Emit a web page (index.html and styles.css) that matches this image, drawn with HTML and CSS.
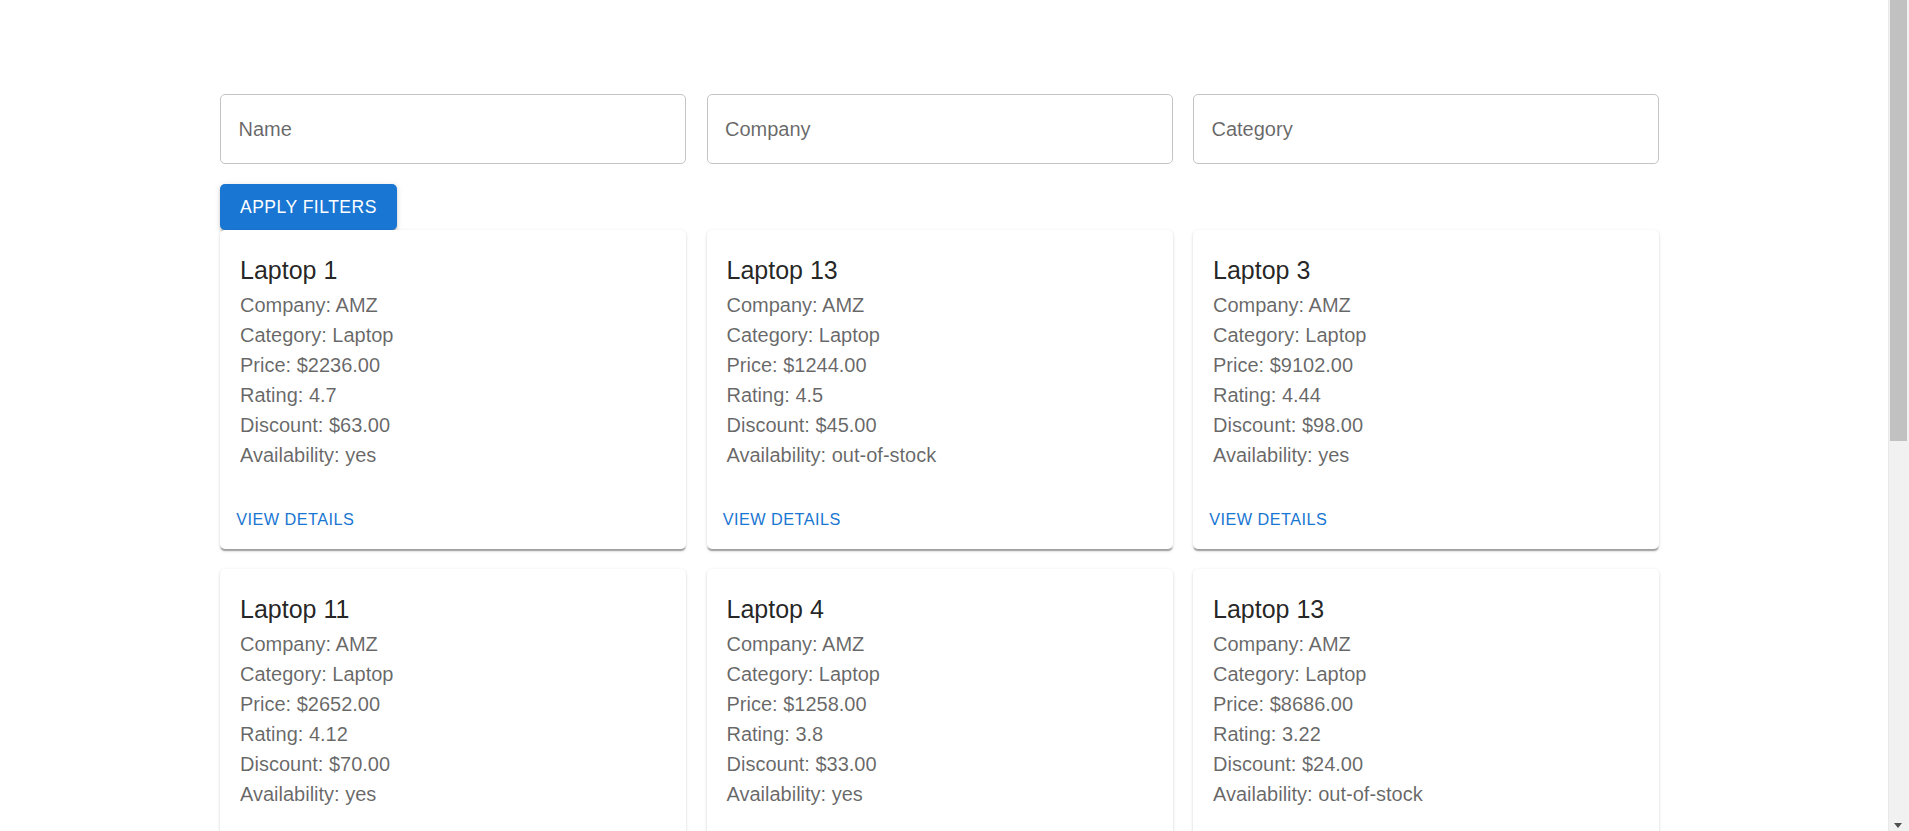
FILE: index.html
```html
<!DOCTYPE html>
<html lang="en">
<head>
<meta charset="utf-8">
<title>Products</title>
<link rel="stylesheet" href="styles.css">
</head>
<body>
<main class="page">
  <section class="filters">
    <label class="field"><input class="field-input" type="text" placeholder="Name"></label>
    <label class="field"><input class="field-input" type="text" placeholder="Company"></label>
    <label class="field"><input class="field-input" type="text" placeholder="Category"></label>
  </section>
  <button class="btn-contained" type="button">Apply Filters</button>
  <section class="grid">
    <article class="card">
      <div class="card-content">
        <h2 class="card-title">Laptop 1</h2>
        <p class="line">Company: AMZ</p>
        <p class="line">Category: Laptop</p>
        <p class="line">Price: $2236.00</p>
        <p class="line">Rating: 4.7</p>
        <p class="line">Discount: $63.00</p>
        <p class="line">Availability: yes</p>
      </div>
      <div class="card-actions"><button class="btn-text" type="button">View Details</button></div>
    </article>
    <article class="card">
      <div class="card-content">
        <h2 class="card-title">Laptop 13</h2>
        <p class="line">Company: AMZ</p>
        <p class="line">Category: Laptop</p>
        <p class="line">Price: $1244.00</p>
        <p class="line">Rating: 4.5</p>
        <p class="line">Discount: $45.00</p>
        <p class="line">Availability: out-of-stock</p>
      </div>
      <div class="card-actions"><button class="btn-text" type="button">View Details</button></div>
    </article>
    <article class="card">
      <div class="card-content">
        <h2 class="card-title">Laptop 3</h2>
        <p class="line">Company: AMZ</p>
        <p class="line">Category: Laptop</p>
        <p class="line">Price: $9102.00</p>
        <p class="line">Rating: 4.44</p>
        <p class="line">Discount: $98.00</p>
        <p class="line">Availability: yes</p>
      </div>
      <div class="card-actions"><button class="btn-text" type="button">View Details</button></div>
    </article>
    <article class="card">
      <div class="card-content">
        <h2 class="card-title">Laptop 11</h2>
        <p class="line">Company: AMZ</p>
        <p class="line">Category: Laptop</p>
        <p class="line">Price: $2652.00</p>
        <p class="line">Rating: 4.12</p>
        <p class="line">Discount: $70.00</p>
        <p class="line">Availability: yes</p>
      </div>
      <div class="card-actions"><button class="btn-text" type="button">View Details</button></div>
    </article>
    <article class="card">
      <div class="card-content">
        <h2 class="card-title">Laptop 4</h2>
        <p class="line">Company: AMZ</p>
        <p class="line">Category: Laptop</p>
        <p class="line">Price: $1258.00</p>
        <p class="line">Rating: 3.8</p>
        <p class="line">Discount: $33.00</p>
        <p class="line">Availability: yes</p>
      </div>
      <div class="card-actions"><button class="btn-text" type="button">View Details</button></div>
    </article>
    <article class="card">
      <div class="card-content">
        <h2 class="card-title">Laptop 13</h2>
        <p class="line">Company: AMZ</p>
        <p class="line">Category: Laptop</p>
        <p class="line">Price: $8686.00</p>
        <p class="line">Rating: 3.22</p>
        <p class="line">Discount: $24.00</p>
        <p class="line">Availability: out-of-stock</p>
      </div>
      <div class="card-actions"><button class="btn-text" type="button">View Details</button></div>
    </article>
  </section>
</main>
<div class="scrollbar" aria-hidden="true">
  <div class="scrollbar-thumb"></div>
  <div class="scrollbar-arrow"></div>
</div>
</body>
</html>
```
FILE: styles.css
```css
html {
  background: #fff;
  scrollbar-width: none;
}
body {
  margin: 0;
  font-family: "Liberation Sans", Arial, Helvetica, sans-serif;
  color: rgba(0, 0, 0, 0.87);
}
.page {
  width: 1439px;
  margin: 0 0 0 220px;
  padding: 94px 0 0;
}
.filters {
  display: grid;
  grid-template-columns: repeat(3, 1fr);
  column-gap: 20.5px;
}
.field {
  display: block;
}
.field-input {
  box-sizing: border-box;
  width: 100%;
  height: 70px;
  margin: 0;
  padding: 0 17.5px;
  border: 1px solid #c4c4c4;
  border-radius: 5px;
  font-family: inherit;
  font-size: 20px;
  color: rgba(0, 0, 0, 0.87);
  background: #fff;
  outline: none;
}
.field-input::placeholder {
  color: rgba(0, 0, 0, 0.6);
  opacity: 1;
}
.btn-contained {
  display: block;
  margin: 20px 0 0;
  height: 46px;
  padding: 0 20px;
  border: 0;
  border-radius: 5px;
  background: #1976d2;
  color: #fff;
  font-family: inherit;
  font-size: 17.5px;
  font-weight: 500;
  letter-spacing: 0.5px;
  text-transform: uppercase;
  box-shadow: 0 3.75px 1.25px -2.5px rgba(0,0,0,0.2), 0 2.5px 2.5px 0 rgba(0,0,0,0.14), 0 1.25px 6.25px 0 rgba(0,0,0,0.12);
  cursor: pointer;
}
.grid {
  display: grid;
  grid-template-columns: repeat(3, 1fr);
  column-gap: 20.5px;
  row-gap: 20px;
}
.card {
  background: #fff;
  border-radius: 5px;
  box-shadow: 0 2.5px 1.25px -1.25px rgba(0,0,0,0.2), 0 1.25px 1.25px 0 rgba(0,0,0,0.14), 0 1.25px 3.75px 0 rgba(0,0,0,0.12);
  overflow: hidden;
}
.card-content {
  padding: 20px;
}
.card-title {
  margin: 0;
  font-size: 25px;
  line-height: 40px;
  font-weight: 500;
  color: rgba(0, 0, 0, 0.87);
}
.line {
  margin: 0;
  font-size: 20px;
  line-height: 30px;
  color: rgba(0, 0, 0, 0.6);
}
.card-actions {
  display: flex;
  align-items: center;
  padding: 10px;
}
.btn-text {
  height: 38.5px;
  min-width: 80px;
  padding: 0 6.25px;
  border: 0;
  border-radius: 5px;
  background: transparent;
  color: #1976d2;
  font-family: inherit;
  font-size: 16.25px;
  font-weight: 500;
  letter-spacing: 0.46px;
  text-transform: uppercase;
  cursor: pointer;
}
.scrollbar {
  position: fixed;
  top: 0;
  right: 0;
  bottom: 0;
  width: 20px;
  background: #f1f1f1;
  border-left: 1px solid #e9e9e9;
}
.scrollbar-thumb {
  position: absolute;
  top: 0;
  left: 1px;
  width: 17px;
  height: 441px;
  background: #c1c1c1;
}
.scrollbar-arrow {
  position: absolute;
  bottom: 3px;
  left: 5px;
  width: 0;
  height: 0;
  border-left: 4.5px solid transparent;
  border-right: 4.5px solid transparent;
  border-top: 5px solid #505050;
}
```
